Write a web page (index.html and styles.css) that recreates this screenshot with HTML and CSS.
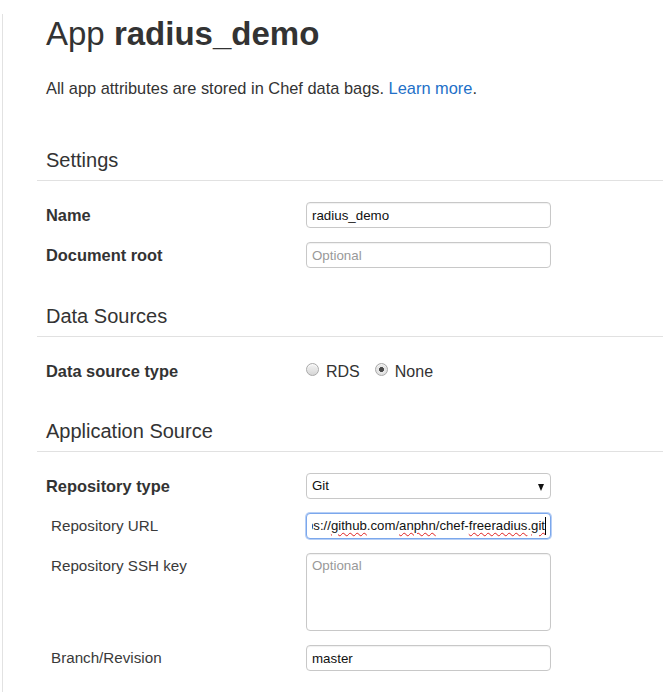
FILE: index.html
```html
<!DOCTYPE html>
<html lang="en">
<head>
<meta charset="utf-8">
<title>App radius_demo</title>
<link rel="stylesheet" href="styles.css">
</head>
<body>
<div class="page">
  <div class="content">
    <h1 class="title">App <strong>radius_demo</strong></h1>
    <p class="lead">All app attributes are stored in Chef data bags. <a href="#" class="link">Learn more</a>.</p>

    <section class="section section-first">
      <h2 class="section-title">Settings</h2>
      <div class="rows">
        <div class="row">
          <label class="label label-bold">Name</label>
          <input class="field" type="text" value="radius_demo">
        </div>
        <div class="row">
          <label class="label label-bold">Document root</label>
          <input class="field" type="text" placeholder="Optional">
        </div>
      </div>
    </section>

    <section class="section">
      <h2 class="section-title">Data Sources</h2>
      <div class="rows">
        <div class="row">
          <label class="label label-bold">Data source type</label>
          <div class="radios">
            <span class="radio"></span><span class="radio-text">RDS</span>
            <span class="radio radio-checked"></span><span class="radio-text">None</span>
          </div>
        </div>
      </div>
    </section>

    <section class="section section-app">
      <h2 class="section-title">Application Source</h2>
      <div class="rows">
        <div class="row">
          <label class="label label-bold">Repository type</label>
          <div class="select">Git</div>
        </div>
        <div class="row">
          <label class="label label-plain">Repository URL</label>
          <div class="field field-focus"><div class="url-clip"><span class="url-text">https://<span class="misspelled">github</span>.com/<span class="misspelled">anphn</span>/chef-<span class="misspelled">freeradius</span>.<span class="misspelled">git</span></span><span class="caret"></span></div></div>
        </div>
        <div class="row">
          <label class="label label-plain">Repository SSH key</label>
          <textarea class="field textarea" placeholder="Optional"></textarea>
        </div>
        <div class="row">
          <label class="label label-plain">Branch/Revision</label>
          <input class="field" type="text" value="master">
        </div>
      </div>
    </section>
  </div>
</div>
</body>
</html>
```

FILE: styles.css
```css
* { box-sizing: border-box; }

html, body {
  margin: 0;
  padding: 0;
  background: #fff;
}

body {
  font-family: "Liberation Sans", Arial, sans-serif;
  color: #333;
}

.page {
  margin-left: 2px;
  border-left: 1px solid #e2e2e2;
  min-height: 692px;
}

.content {
  padding-left: 34px;
}

.title {
  margin: 14px 0 0;
  padding-left: 9px;
  font-size: 33px;
  line-height: 40px;
  font-weight: normal;
  color: #333;
}

.title strong {
  font-weight: bold;
}

.lead {
  margin: 23px 0 0;
  padding-left: 9px;
  font-size: 16.4px;
  line-height: 22px;
  color: #333;
}

.link {
  color: #2270c8;
  text-decoration: none;
}

.section {
  margin-top: 37px;
}

.section-first {
  margin-top: 50px;
}

.section-app {
  margin-top: 36px;
}

.section-title {
  margin: 0;
  padding: 0 0 9px 9px;
  font-size: 20px;
  line-height: 22px;
  font-weight: normal;
  color: #333;
  border-bottom: 1px solid #e1e1e1;
}

.rows {
  display: flex;
  flex-direction: column;
  gap: 14px;
  padding: 21px 0 0 9px;
}

.row {
  display: grid;
  grid-template-columns: 260px 245px;
  align-items: start;
}

.label {
  line-height: 26px;
  color: #333;
}

.label-bold {
  font-weight: bold;
  font-size: 16.4px;
}

.label-plain {
  font-size: 15.2px;
  padding-left: 5px;
  color: #3a3a3a;
}

.field {
  display: block;
  width: 245px;
  height: 26px;
  margin: 0;
  padding: 0 5px;
  font-family: "Liberation Sans", Arial, sans-serif;
  font-size: 13.33px;
  color: #111;
  background: #fff;
  border: 1px solid #c8c8c8;
  border-radius: 4px;
  box-shadow: inset 0 1px 1px rgba(0, 0, 0, 0.06);
  outline: none;
}

.field::placeholder {
  color: #999;
}

.textarea {
  height: 78px;
  padding: 4px 5px;
  resize: none;
  line-height: 16px;
}

.select {
  position: relative;
  width: 245px;
  height: 26px;
  padding: 0 5px;
  font-size: 13.33px;
  line-height: 24px;
  color: #111;
  background: #fff;
  border: 1px solid #c8c8c8;
  border-radius: 4px;
}

.select::after {
  content: "";
  position: absolute;
  right: 6px;
  top: 10px;
  border-left: 3.5px solid transparent;
  border-right: 3.5px solid transparent;
  border-top: 7px solid #111;
}

.field-focus {
  padding: 0 4px 0 5px;
  border-color: #7ba7ec;
  box-shadow: 0 0 0 1px rgba(123, 167, 236, 0.55);
}

.url-clip {
  display: flex;
  justify-content: flex-end;
  align-items: center;
  height: 24px;
  overflow: hidden;
  white-space: nowrap;
}

.url-text {
  flex: none;
  font-size: 13.2px;
  line-height: 24px;
  color: #111;
}

.misspelled {
  text-decoration: underline wavy #e02020;
  text-decoration-thickness: 1px;
  text-underline-offset: 2px;
}

.caret {
  flex: none;
  width: 1px;
  height: 18px;
  background: #000;
}

.radios {
  display: flex;
  align-items: flex-start;
  height: 26px;
  padding-top: 2px;
  font-size: 16px;
  line-height: 24px;
  color: #333;
}

.radio {
  flex: none;
  width: 13px;
  height: 13px;
  margin-top: 3px;
  border: 1px solid #a9a9a9;
  border-radius: 50%;
  background: linear-gradient(#f4f4f4, #d6d6d6);
  box-shadow: inset 0 1px 1px rgba(255, 255, 255, 0.8);
}

.radio-checked {
  background: radial-gradient(circle, #4a4a4a 0 2.2px, #e9e9e9 2.8px, #d4d4d4 100%);
}

.radio-text {
  margin-left: 7px;
  margin-right: 15px;
}
```
